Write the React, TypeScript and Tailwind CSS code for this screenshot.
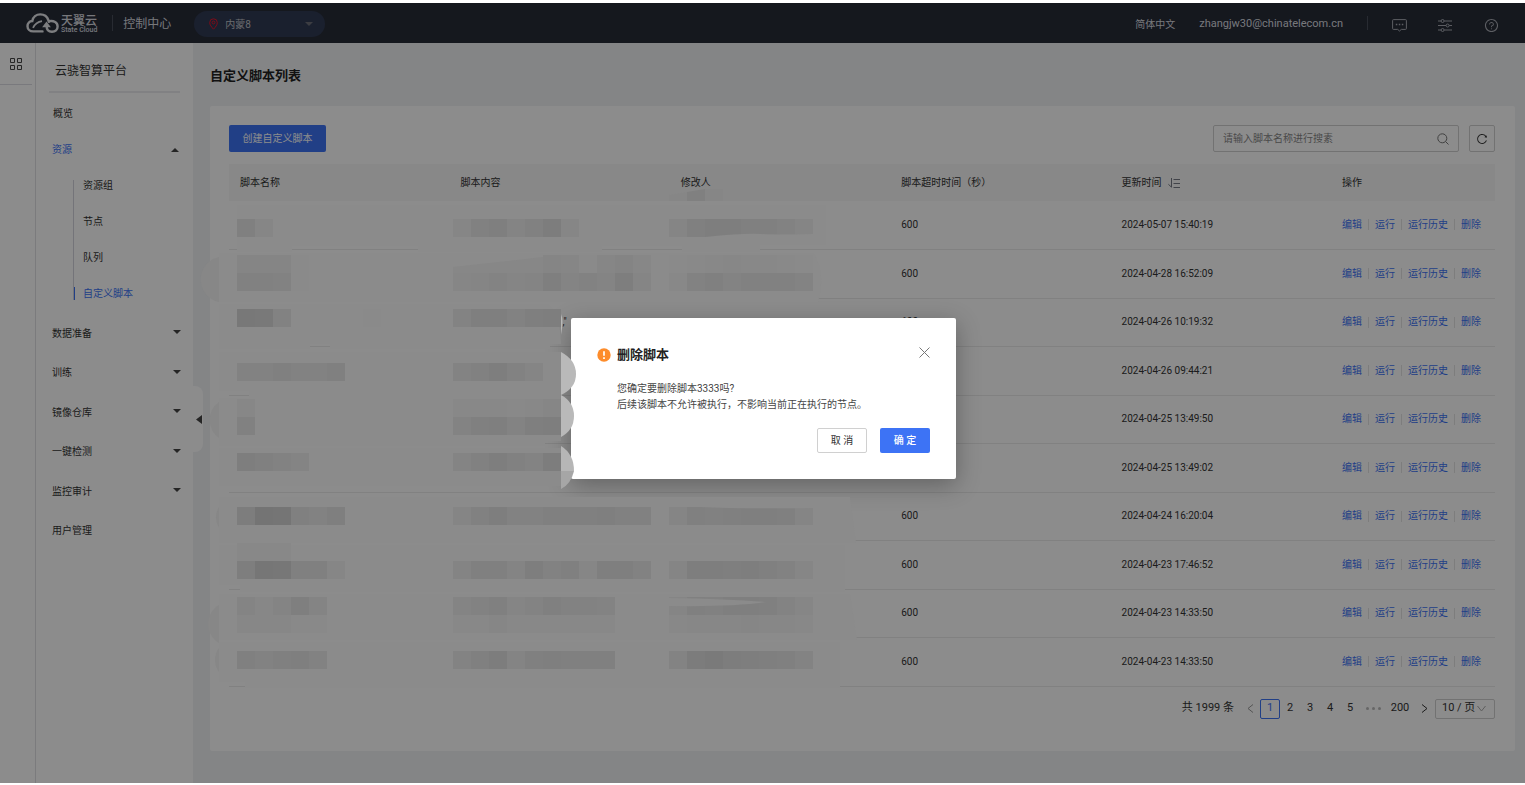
import { useState } from "react";
import { AiOutlineQuestionCircle, AiOutlineReload } from "react-icons/ai";

type MenuItem = { label: string; expandable: boolean };

type ScriptRow = {
  id: number;
  content: string;
  timeout: string;
  updatedAt: string;
};

type MosaicRun = { col: number; y: number; shades: string[] };

const SUB_MENU = ["资源组", "节点", "队列", "自定义脚本"];

const MENU: MenuItem[] = [
  { label: "数据准备", expandable: true },
  { label: "训练", expandable: true },
  { label: "镜像仓库", expandable: true },
  { label: "一键检测", expandable: true },
  { label: "监控审计", expandable: true },
  { label: "用户管理", expandable: false },
];

const ROWS: ScriptRow[] = [
  { id: 1, content: "", timeout: "600", updatedAt: "2024-05-07 15:40:19" },
  { id: 2, content: "", timeout: "600", updatedAt: "2024-04-28 16:52:09" },
  { id: 3, content: ',"', timeout: "600", updatedAt: "2024-04-26 10:19:32" },
  { id: 4, content: "", timeout: "600", updatedAt: "2024-04-26 09:44:21" },
  { id: 5, content: "", timeout: "600", updatedAt: "2024-04-25 13:49:50" },
  { id: 6, content: "", timeout: "600", updatedAt: "2024-04-25 13:49:02" },
  { id: 7, content: "", timeout: "600", updatedAt: "2024-04-24 16:20:04" },
  { id: 8, content: "", timeout: "600", updatedAt: "2024-04-23 17:46:52" },
  { id: 9, content: "", timeout: "600", updatedAt: "2024-04-23 14:33:50" },
  { id: 10, content: "", timeout: "600", updatedAt: "2024-04-23 14:33:50" },
];

const ACTIONS = ["编辑", "运行", "运行历史", "删除"];
const PAGES = ["1", "2", "3", "4", "5"];

// 打码色块,每格 18px,shades 为灰度值
const CELL = 18;
const MOSAIC: MosaicRun[] = [
  { col: 0, y: 219, shades: ["80", "86"] },
  { col: 12, y: 219, shades: ["86", "81", "7f", "84", "81", "7d", "86"] },
  { col: 24, y: 219, shades: ["85", "80", "7e", "7e", "80", "80", "82", "85"] },
  { col: 0, y: 255, shades: ["85", "85", "85", "8a"] },
  { col: 17, y: 255, shades: ["85", "86", "8a", "86", "84", "87"] },
  { col: 24, y: 255, shades: ["8a", "89", "88", "87", "88", "88", "89", "8a"] },
  { col: 0, y: 273, shades: ["81", "81", "82", "8a"] },
  { col: 12, y: 273, shades: ["86", "85", "83", "85", "84", "7f", "84", "82", "84", "7e", "85"] },
  { col: 24, y: 273, shades: ["88", "82", "80", "83", "81", "81", "81", "83"] },
  { col: 0, y: 309, shades: ["78", "79", "82"] },
  { col: 7, y: 309, shades: ["8a"] },
  { col: 12, y: 309, shades: ["83", "7f", "7f", "82", "7f", "7e"] },
  { col: 0, y: 363, shades: ["82", "82", "80", "82", "82", "80"] },
  { col: 12, y: 363, shades: ["83", "81", "7e", "82", "85"] },
  { col: 0, y: 399, shades: ["87"] },
  { col: 12, y: 399, shades: ["88", "88", "88", "89", "88", "86"] },
  { col: 0, y: 417, shades: ["81"] },
  { col: 12, y: 417, shades: ["83", "80", "7f", "83", "7f", "7e"] },
  { col: 0, y: 453, shades: ["7e", "80", "82", "84"] },
  { col: 12, y: 453, shades: ["84", "81", "7e", "81", "83", "7d"] },
  { col: 0, y: 507, shades: ["7d", "74", "75", "80", "82", "7f"] },
  { col: 12, y: 507, shades: ["85", "81", "7e", "82", "82", "80", "80", "80", "7f", "81", "81"] },
  { col: 24, y: 507, shades: ["85", "80", "81", "80", "7f", "7f", "80", "85"] },
  { col: 0, y: 543, shades: ["88", "88", "88"] },
  { col: 0, y: 561, shades: ["7e", "76", "77", "80", "80", "86"] },
  { col: 12, y: 561, shades: ["84", "80", "80", "84", "7e", "82", "80", "86", "7f", "7f", "82"] },
  { col: 24, y: 561, shades: ["85", "7e", "7e", "7f", "7e", "80", "82", "86"] },
  { col: 0, y: 597, shades: ["84", "87", "84", "7f", "84"] },
  { col: 12, y: 597, shades: ["84", "82", "80", "85", "83", "80", "82", "82", "83"] },
  { col: 24, y: 597, shades: ["85", "80", "81", "7f", "7f", "80", "83", "86"] },
  { col: 0, y: 615, shades: ["87", "87", "87", "89", "89"] },
  { col: 12, y: 615, shades: ["88", "88", "86", "88", "88", "88", "88", "88", "88"] },
  { col: 24, y: 615, shades: ["88", "87", "87", "87", "86", "87", "87", "88"] },
  { col: 0, y: 651, shades: ["80", "82", "80", "7f", "82"] },
  { col: 12, y: 651, shades: ["83", "80", "7d", "84", "80", "7f", "80", "80", "80"] },
  { col: 24, y: 651, shades: ["83", "7c", "7a", "7d", "7e", "7f", "80", "83"] },
];

const Caret: React.FC<{ up?: boolean }> = ({ up = false }) => (
  <svg width="8" height="4" viewBox="0 0 8 4" aria-hidden="true">
    <path d={up ? "M0 4 4 0l4 4z" : "M0 0h8L4 4z"} fill="currentColor" />
  </svg>
);

const Chevron: React.FC<{ d: string }> = ({ d }) => (
  <svg width="9" height="9" viewBox="0 0 9 9" fill="none" stroke="currentColor" aria-hidden="true">
    <path d={d} />
  </svg>
);

const CloudLogo = () => (
  <svg width="33" height="21" viewBox="0 0 33 21" fill="none" aria-hidden="true">
    <path
      d="M16.500 18.400H7.200C3.800 18.400 1.500 16 1.500 13.200c0-2.900 2.100-5 4.800-5.200C7 4 10.300 1.400 14.300 1.400c3.800 0 6.800 2 8 5.600l.5 1.800"
      stroke="#e4e6ea"
      strokeWidth="2.400"
      strokeLinecap="round"
    />
    <path
      d="M22.800 8.200c5.200-1 8.800 1.300 8.800 5.200 0 3.200-2.400 5.300-5.600 5.300-3.800 0-5.400-2.200-5.400-5.700"
      stroke="#e4e6ea"
      strokeWidth="2.400"
    />
    <path d="M20.500 8.600l4.400 5.600h-8.800z" fill="#e4e6ea" />
    <path d="M7 14.800C8.800 11.400 11.800 8.900 16 8.200" stroke="#e4e6ea" strokeWidth="1.800" />
  </svg>
);

const Header = () => (
  <header className="flex h-10 items-center bg-[#272c38] pr-[26px] pl-[26px] text-[#d9dbe0]">
    <CloudLogo />
    <div className="ml-0.5 flex flex-col pt-0.5">
      <span className="text-[12px] leading-[12px] font-medium">天翼云</span>
      <span className="text-[7px] leading-[7px] font-medium">State Cloud</span>
    </div>
    <span className="ml-[15px] h-4 w-px bg-[#4a4f5b]"></span>
    <span className="ml-[10px] pt-0.5 text-[12px]">控制中心</span>
    <button
      type="button"
      className="mt-0.5 ml-[23px] flex h-[26px] w-[131px] items-center rounded-full bg-[#313b54] pr-3 pl-[15px] text-[10px] text-[#c0c3ca]"
    >
      <svg width="9" height="12" viewBox="0 0 9 12" fill="none" stroke="#e6142d" aria-hidden="true">
        <path d="M4.500 11.200C2.500 9 .7 6.900.7 4.600a3.800 3.800 0 0 1 7.600 0c0 2.300-1.800 4.400-3.800 6.600z" />
        <circle cx="4.500" cy="4.500" r="1.400" />
      </svg>
      <span className="mr-auto ml-[7px]">内蒙8</span>
      <span className="text-[#6d7078]">
        <Caret />
      </span>
    </button>
    <a href="#" className="ml-auto pt-0.5 text-[10px]">
      简体中文
    </a>
    <a href="#" className="ml-6 pt-0.5 text-[11px]">
      zhangjw30@chinatelecom.cn
    </a>
    <span className="ml-6 h-3.5 w-px bg-[#4a4f5b]"></span>
    <button type="button" aria-label="消息" className="ml-6 pt-1">
      <svg width="15" height="13" viewBox="0 0 15 13" fill="none" stroke="#a9acb4" aria-hidden="true">
        <path d="M1.500.6h12q.9 0 .9.900v8q0 .9-.9.900H9.300L7.500 12 5.700 10.400H1.500q-.9 0-.9-.9v-8q0-.9.900-.9z" />
        <path d="M3.800 5.500h1.500M6.800 5.500h1.500M9.800 5.500h1.500" strokeWidth="1.400" />
      </svg>
    </button>
    <button type="button" aria-label="设置" className="ml-[31px] pt-1">
      <svg width="14" height="13" viewBox="0 0 14 13" fill="none" stroke="#a9acb4" aria-hidden="true">
        <path d="M0 2h3M6.200 2H14M0 6.500h8M11.200 6.500H14M0 11h3M6.200 11H14" />
        <circle cx="4.600" cy="2" r="1.500" />
        <circle cx="9.600" cy="6.500" r="1.500" />
        <circle cx="4.600" cy="11" r="1.500" />
      </svg>
    </button>
    <button type="button" aria-label="帮助" className="ml-8 pt-1 text-[15px] text-[#a9acb4]">
      <AiOutlineQuestionCircle />
    </button>
  </header>
);

const Sidebar = () => (
  <aside className="relative w-[157px] shrink-0 bg-white pt-[10px] text-[10px] text-[#333]">
    <div className="mx-[13px] flex h-10 items-center border-b-2 border-[#ebebee] pb-0.5 pl-1.5 text-[12px]">
      云骁智算平台
    </div>
    <nav className="mt-0.5">
      <a href="#" className="flex h-9 items-center pl-[17px]">
        概览
      </a>
      <button
        type="button"
        className="flex h-9 w-full items-center justify-between pr-[14px] pl-4 text-[#3d73f5]"
      >
        资源
        <span className="pt-0.5 text-[#444]">
          <Caret up />
        </span>
      </button>
      <ul className="relative">
        <li className="absolute top-[13px] bottom-[11px] left-[37px] w-px bg-[#d4d4dc]"></li>
        {SUB_MENU.map((label) => (
          <li key={label} className="flex h-9 items-center">
            {label === "自定义脚本" ? (
              <a
                href="#"
                className="ml-[37px] border-l-2 border-[#3d73f5] pl-2 leading-[13px] text-[#3d73f5]"
              >
                {label}
              </a>
            ) : (
              <a href="#" className="ml-[47px]">
                {label}
              </a>
            )}
          </li>
        ))}
      </ul>
      {MENU.map((item) => (
        <button
          key={item.label}
          type="button"
          className="flex h-[39px] w-full items-center justify-between pt-1 pr-[12px] pl-4 even:h-10"
        >
          {item.label}
          {item.expandable && (
            <span className="pb-0.5 text-[#444]">
              <Caret />
            </span>
          )}
        </button>
      ))}
    </nav>
    <button
      type="button"
      aria-label="收起菜单"
      className="absolute top-[343px] -right-[10px] flex h-[66px] w-[10px] items-center justify-end rounded-r-lg bg-white pr-px text-[#444]"
    >
      <svg width="6" height="9" viewBox="0 0 6 9" aria-hidden="true">
        <path d="M6 0v9L0 4.500z" fill="currentColor" />
      </svg>
    </button>
  </aside>
);

const ScriptTable = () => (
  <table className="mt-3 w-full table-fixed border-collapse text-left text-[10px] leading-4">
    <thead>
      <tr className="h-[37px] bg-[#f7f7f7]">
        <th className="pl-[11px] font-normal">脚本名称</th>
        <th className="pl-[11px] font-normal">脚本内容</th>
        <th className="pl-[11px] font-normal">修改人</th>
        <th className="pl-[11px] font-normal">脚本超时时间（秒）</th>
        <th className="pl-[11px] font-normal">
          <button type="button" className="flex items-center gap-1.5">
            更新时间
            <svg width="12" height="10" viewBox="0 0 12 10" fill="none" stroke="#777b86" aria-hidden="true">
              <path d="M3.500 0v9.200L.4 6.300M5.500 1.500H12M5.500 5.500H12M5.500 9.500H12" />
            </svg>
          </button>
        </th>
        <th className="w-[164px] pl-[11px] font-normal">操作</th>
      </tr>
    </thead>
    <tbody>
      {ROWS.map((row) => (
        <tr key={row.id} className="h-12 border-b border-[#ececec] even:h-[49px]">
          <td></td>
          <td className="pl-[113px]">{row.content}</td>
          <td></td>
          <td className="pl-[11px]">{row.timeout}</td>
          <td className="pl-[11px]">{row.updatedAt}</td>
          <td className="pl-[11px]">
            <div className="flex items-center">
              {ACTIONS.map((action, index) => (
                <div key={action} className="flex items-center">
                  {index > 0 && <span className="mx-1.5 h-[11px] w-px bg-[#e4e4e4]"></span>}
                  <a href="#" className="text-[#3d73f5]">
                    {action}
                  </a>
                </div>
              ))}
            </div>
          </td>
        </tr>
      ))}
    </tbody>
  </table>
);

const Pagination = () => (
  <div className="mt-3 flex h-5 items-center justify-end text-[11px]">
    <span className="mr-1.5">共 1999 条</span>
    <button type="button" aria-label="上一页" className="flex w-5 justify-center text-[#999]">
      <Chevron d="M7 .5l-5 4 5 4" />
    </button>
    {PAGES.map((page) =>
      page === "1" ? (
        <button key={page} type="button" className="h-5 w-5 rounded-xs border border-[#3d73f5] text-[#3d73f5]">
          {page}
        </button>
      ) : (
        <button key={page} type="button" className="h-5 w-5">
          {page}
        </button>
      ),
    )}
    <span className="flex w-[26px] items-center justify-center gap-[3px]">
      <i className="h-[3px] w-[3px] rounded-full bg-[#bbb]"></i>
      <i className="h-[3px] w-[3px] rounded-full bg-[#bbb]"></i>
      <i className="h-[3px] w-[3px] rounded-full bg-[#bbb]"></i>
    </span>
    <button type="button" className="h-5 w-7">
      200
    </button>
    <button type="button" aria-label="下一页" className="flex w-5 justify-center">
      <Chevron d="M2 .5l5 4-5 4" />
    </button>
    <div className="relative ml-px">
      <select
        aria-label="每页条数"
        className="h-5 w-[60px] appearance-none rounded-xs border border-[#d0d0d0] bg-white pl-1.5 text-[11px]"
      >
        <option>10 / 页</option>
        <option>20 / 页</option>
      </select>
      <span className="pointer-events-none absolute top-[5px] right-[9px] text-[#aaa]">
        <Chevron d="M.5 2l4 5 4-5" />
      </span>
    </div>
  </div>
);

const Mosaic = () => (
  <svg
    width="900"
    height="700"
    viewBox="0 3 900 700"
    className="pointer-events-none absolute top-0 left-0"
    aria-hidden="true"
  >
    {/* 涂抹痕迹 */}
    <g fill="#8b8b8b">
      <path d="M237 205H826V245H760V252H682V246H602V252H418V246H292V252H237z" />
      <path d="M219 253H814Q826 275 818 302H219z" />
      <path d="M219 304H548Q560 312 561 344H550V349H330V344H310V349H219z" />
      <path d="M219 352H561V398H249V391H219z" />
      <path d="M219 398H561V441H545V446H219z" />
      <path d="M219 448H561V486H219z" />
      <path d="M219 497H850L856 543H219z" />
      <path d="M219 545H845V592H240V585H219z" />
      <path d="M219 594H850L857 640H219z" />
      <path d="M219 642H840V688H245V682H219z" />
    </g>
    <g fill="#878787">
      <path d="M219 257a23 23 0 0 0 0 45z" />
      <path d="M219 402a22 22 0 0 0 0 36z" />
      <path d="M219 507a20 20 0 0 0 0 21z" />
      <path d="M219 605a22 22 0 0 0 0 38z" />
      <path d="M219 648a20 20 0 0 0 0 24z" />
      <path d="M453 267L543 257V273H453z" />
    </g>
    {MOSAIC.map((run) =>
      run.shades.map((shade, index) => (
        <rect
          key={`${run.col}-${run.y}-${index}`}
          x={237 + (run.col + index) * CELL}
          y={run.y}
          width={CELL}
          height={CELL}
          fill={`#${shade}${shade}${shade}`}
        />
      )),
    )}
    <path d="M669 195L687 192V201H669z" fill="#868686" />
    <path d="M687 192L705 189V201H687z" fill="#808080" />
    <path d="M705 189H723V201H705z" fill="#868686" />
    <path d="M705 237Q745 233 760 234T813 234V238H705z" fill="#8b8b8b" />
    <path d="M669 598Q730 599 766 602Q735 607 669 606z" fill="#8b8b8b" />
    <path d="M669 507H700Q740 509 813 508V506H669z" fill="#8b8b8b" />
    {/* 弹窗左侧露出的圆形笔触 */}
    <path d="M561 314Q564 320 561 335z" fill="#b8b8b8" />
    <path d="M561 352Q576 360 576 374T561 395z" fill="#b9b9b9" />
    <path d="M561 395Q574 402 574 416T561 437z" fill="#b9b9b9" />
    <path d="M561 446Q574 454 574 471H561z" fill="#b6b6b6" />
    <path d="M561 471H574Q571 484 561 489z" fill="#a6a6a6" />
  </svg>
);

const DeleteDialog: React.FC<{ onClose: () => void }> = ({ onClose }) => (
  <div className="absolute inset-0 flex items-center justify-center bg-black/45 pt-[11px] pl-0.5">
    <div
      role="dialog"
      aria-labelledby="dialog-title"
      className="w-[385px] rounded-xs bg-white px-[26px] pt-[29px] pb-[26px] shadow-[0_6px_24px_rgba(0,0,0,0.3)]"
    >
      <div className="flex h-4 items-center">
        <svg width="14" height="14" viewBox="0 0 14 14" aria-hidden="true">
          <circle cx="7" cy="7" r="6.700" fill="#fd8c2b" />
          <path d="M7 3.200v4.600M7 9.200v1.700" stroke="#fff" strokeWidth="1.700" />
        </svg>
        <h2 id="dialog-title" className="ml-1.5 text-[13px] font-bold text-[#222]">
          删除脚本
        </h2>
        <button type="button" aria-label="关闭" onClick={onClose} className="ml-auto self-start">
          <svg width="11" height="11" viewBox="0 0 11 11" stroke="#777" aria-hidden="true">
            <path d="M.5.5l10 10M10.500.5l-10 10" />
          </svg>
        </button>
      </div>
      <p className="mt-[18px] pl-5 text-[10px] leading-4 text-[#444]">
        您确定要删除脚本3333吗?
        <br />
        后续该脚本不允许被执行，不影响当前正在执行的节点。
      </p>
      <div className="mt-[15px] flex justify-end gap-[13px] text-[10px]">
        <button
          type="button"
          onClick={onClose}
          className="h-[25px] w-[50px] rounded-xs border border-[#d0d0d0] text-[#333]"
        >
          取 消
        </button>
        <button
          type="button"
          onClick={onClose}
          className="h-[25px] w-[50px] rounded-xs bg-[#3d73f5] font-medium text-white"
        >
          确 定
        </button>
      </div>
    </div>
  </div>
);

const App = () => {
  const [isOpen, setIsOpen] = useState(true);

  return (
    <div className="flex min-h-screen flex-col bg-white pt-[3px] pb-0.5 font-[Roboto,'Noto_Sans_CJK_SC',sans-serif] text-[#333]">
      <div className="relative flex flex-1 flex-col">
        <Header />
        <div className="flex flex-1">
          <div className="w-9 shrink-0 border-r border-[#e0e0e4] bg-white">
            <button
              type="button"
              aria-label="全部产品"
              className="flex h-[42px] w-8 items-center justify-center border-b border-[#dcdce4]"
            >
              <svg width="12" height="12" viewBox="0 0 12 12" fill="none" stroke="#444" aria-hidden="true">
                <path d="M.5.5h4v4h-4zM7.500.5h4v4h-4zM.5 7.500h4v4h-4zM7.500 7.500h4v4h-4z" />
              </svg>
            </button>
          </div>
          <Sidebar />
          <main className="min-w-0 flex-1 bg-[#f0f2f5] pr-[10px] pl-[17px]">
            <h1 className="flex h-[63px] items-center pt-0.5 text-[13px] font-bold text-[#222]">自定义脚本列表</h1>
            <section className="rounded-xs bg-white pt-[19px] pr-5 pb-8 pl-[19px]">
              <div className="flex items-center">
                <button type="button" className="h-[27px] w-[97px] rounded-xs bg-[#3d73f5] text-[10px] text-white">
                  创建自定义脚本
                </button>
                <div className="ml-auto flex h-[27px] w-[246px] items-center rounded-xs border border-[#d0d0d0] px-[9px]">
                  <input
                    aria-label="脚本名称"
                    placeholder="请输入脚本名称进行搜素"
                    className="min-w-0 flex-1 text-[10px] outline-none placeholder:text-[#888]"
                  />
                  <svg width="12" height="12" viewBox="0 0 12 12" fill="none" stroke="#777" aria-hidden="true">
                    <circle cx="5.300" cy="5.300" r="4.500" />
                    <path d="M8.500 8.500l3 3" />
                  </svg>
                </div>
                <button
                  type="button"
                  aria-label="刷新"
                  className="ml-[10px] flex h-[27px] w-[26px] items-center justify-center rounded-xs border border-[#d0d0d0] text-[12px]"
                >
                  <AiOutlineReload />
                </button>
              </div>
              <ScriptTable />
              <Pagination />
            </section>
          </main>
        </div>
        {isOpen && <DeleteDialog onClose={() => setIsOpen(false)} />}
        {isOpen && <Mosaic />}
      </div>
    </div>
  );
};

export default App;
